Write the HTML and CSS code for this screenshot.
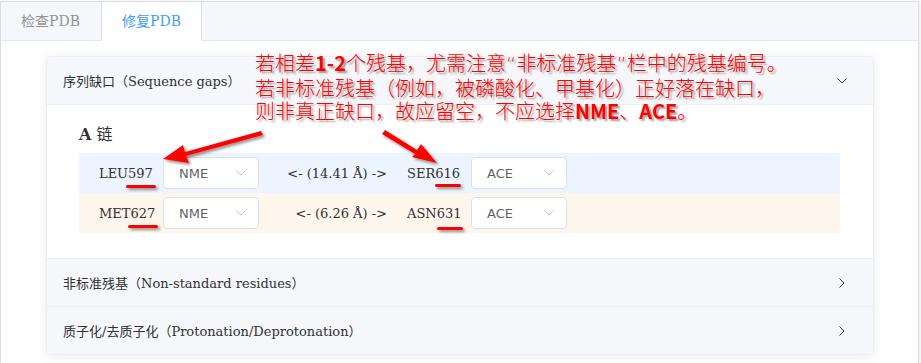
FILE: index.html
```html
<!DOCTYPE html>
<html lang="zh">
<head>
<meta charset="utf-8">
<title>修复PDB</title>
<link rel="stylesheet" href="styles.css">
</head>
<body>
<div class="tabs">
  <div class="tabs-header">
    <div class="tab">检查PDB</div>
    <div class="tab active">修复PDB</div>
  </div>
  <div class="tabs-content">
    <div class="card">
      <div class="coll-head open">
        <span>序列缺口（Sequence gaps）</span>
        <svg class="chev-down" width="10" height="6" viewBox="0 0 10 6"><path d="M0.5 0.5 L5 5 L9.5 0.5" fill="none" stroke="#303133" stroke-width="1"/></svg>
      </div>
      <div class="coll-body">
        <div class="chain-title"><b>A</b> 链</div>
        <div class="gap-row blue">
          <span class="res">LEU597</span>
          <div class="select"><span>NME</span><svg width="10" height="6" viewBox="0 0 10 6"><path d="M0.5 0.5 L5 5 L9.5 0.5" fill="none" stroke="#c0c4cc" stroke-width="1"/></svg></div>
          <span class="dist">&lt;- (14.41 Å) -&gt;</span>
          <span class="res">SER616</span>
          <div class="select"><span>ACE</span><svg width="10" height="6" viewBox="0 0 10 6"><path d="M0.5 0.5 L5 5 L9.5 0.5" fill="none" stroke="#c0c4cc" stroke-width="1"/></svg></div>
        </div>
        <div class="gap-row orange">
          <span class="res">MET627</span>
          <div class="select"><span>NME</span><svg width="10" height="6" viewBox="0 0 10 6"><path d="M0.5 0.5 L5 5 L9.5 0.5" fill="none" stroke="#c0c4cc" stroke-width="1"/></svg></div>
          <span class="dist">&lt;- (6.26 Å) -&gt;</span>
          <span class="res">ASN631</span>
          <div class="select"><span>ACE</span><svg width="10" height="6" viewBox="0 0 10 6"><path d="M0.5 0.5 L5 5 L9.5 0.5" fill="none" stroke="#c0c4cc" stroke-width="1"/></svg></div>
        </div>
      </div>
      <div class="coll-head">
        <span>非标准残基（Non-standard residues）</span>
        <svg class="chev-right" width="6" height="10" viewBox="0 0 6 10"><path d="M0.5 0.5 L5 5 L0.5 9.5" fill="none" stroke="#303133" stroke-width="1"/></svg>
      </div>
      <div class="coll-head last">
        <span>质子化/去质子化（Protonation/Deprotonation）</span>
        <svg class="chev-right" width="6" height="10" viewBox="0 0 6 10"><path d="M0.5 0.5 L5 5 L0.5 9.5" fill="none" stroke="#303133" stroke-width="1"/></svg>
      </div>
    </div>
  </div>
</div>

<div class="note">若相差<b>1-2</b>个残基，尤需注意<span class="q">“</span>非标准残基<span class="q">”</span>栏中的残基编号。<br>若非标准残基（例如，被磷酸化、甲基化）正好落在缺口，<br>则非真正缺口，故应留空，不应选择<b>NME</b>、<b>ACE</b>。</div>

<svg class="marks" width="921" height="363" viewBox="0 0 921 363">
  <defs>
    <filter id="sh" x="-20%" y="-50%" width="140%" height="200%">
      <feDropShadow dx="2" dy="2" stdDeviation="1.5" flood-color="#000" flood-opacity="0.45"/>
    </filter>
  </defs>
  <g fill="#f00" stroke="none" filter="url(#sh)">
    <path d="M261 131 L263 135 L186 156 L189 163 L163 159 L183 145 L185 152 Z"/>
    <path d="M382 134 L385 130 L417 150 L421 144 L437 163 L412 157 L415 154 Z"/>
    <rect x="126" y="185" width="30" height="3" rx="1.5"/>
    <rect x="128" y="225" width="30" height="3" rx="1.5"/>
    <rect x="435" y="184" width="26" height="3" rx="1.5"/>
    <rect x="437" y="227" width="26" height="3" rx="1.5"/>
  </g>
</svg>
</body>
</html>
```
FILE: styles.css
```css
html, body {
  margin: 0;
  padding: 0;
  background: #fff;
}
body {
  font-family: "DejaVu Serif", "Noto Sans CJK SC", serif;
  color: #303133;
  position: relative;
  width: 921px;
  height: 363px;
  overflow: hidden;
}
.tabs {
  margin-top: 1px;
  width: 917px;
  border: 1px solid #dcdfe6;
  box-shadow: 0 2px 4px rgba(0,0,0,.12), 0 0 6px rgba(0,0,0,.04);
  background: #fff;
  height: 420px;
}
.tabs-header {
  display: flex;
  height: 38px;
  background: #f5f7fa;
  border-bottom: 1px solid #e4e7ed;
}
.tab {
  box-sizing: border-box;
  height: 39px;
  line-height: 39px;
  font-size: 14px;
  color: #909399;
  text-align: center;
  border-right: 1px solid transparent;
  border-left: 1px solid transparent;
}
.tab:first-child {
  border-left: none;
  width: 100px;
}
.tab.active {
  width: 101px;
  background: #fff;
  color: #409eff;
  border-left-color: #dcdfe6;
  border-right-color: #dcdfe6;
}
.tabs-content {
  padding: 15px 44px 15px 45px;
}
.card {
  border: 1px solid #ebeef5;
  border-radius: 4px;
  box-shadow: 0 2px 12px rgba(0,0,0,.08);
  overflow: hidden;
  width: 826px;
}
.coll-head {
  display: flex;
  align-items: center;
  justify-content: space-between;
  height: 47px;
  padding: 0 26px 0 16px;
  background: #f5f7fa;
  border-bottom: 1px solid #ebeef5;
  font-size: 13px;
  color: #303133;
}
.coll-head.last {
  border-bottom: none;
}
.chev-right {
  margin-right: 2px;
}
.coll-body {
  padding: 18px 33px 25px 32px;
  border-bottom: 1px solid #ebeef5;
  background: #fff;
}
.chain-title {
  font-size: 16px;
  line-height: 24px;
  margin-bottom: 6px;
  color: #303133;
}
.gap-row {
  display: flex;
  align-items: center;
  height: 40px;
  padding-left: 20px;
  font-size: 13px;
  color: #303133;
}
.gap-row.blue { background: #ecf5ff; }
.gap-row.orange { background: #fdf6ec; }
.res {
  width: 64px;
  flex: none;
}
.select {
  box-sizing: border-box;
  width: 96px;
  height: 32px;
  border: 1px solid #dcdfe6;
  border-radius: 4px;
  background: #fff;
  display: flex;
  align-items: center;
  justify-content: space-between;
  padding: 0 12px 0 15px;
  font-family: "DejaVu Sans", sans-serif;
  font-size: 13px;
  color: #606266;
  flex: none;
}
.dist {
  width: 128px;
  text-align: right;
  padding-right: 20px;
  flex: none;
}
.note {
  position: absolute;
  left: 255px;
  top: 51px;
  font-family: "Noto Sans CJK SC", sans-serif;
  font-size: 20px;
  font-weight: 300;
  line-height: 23px;
  color: #ff0000;
  white-space: nowrap;
  text-shadow: 2px 2px 2px rgba(0,0,0,.4);
}
.note b {
  font-weight: 700;
}
.note .q {
  font-family: "DejaVu Sans", sans-serif;
}
.marks {
  position: absolute;
  left: 0;
  top: 0;
  pointer-events: none;
}
```
